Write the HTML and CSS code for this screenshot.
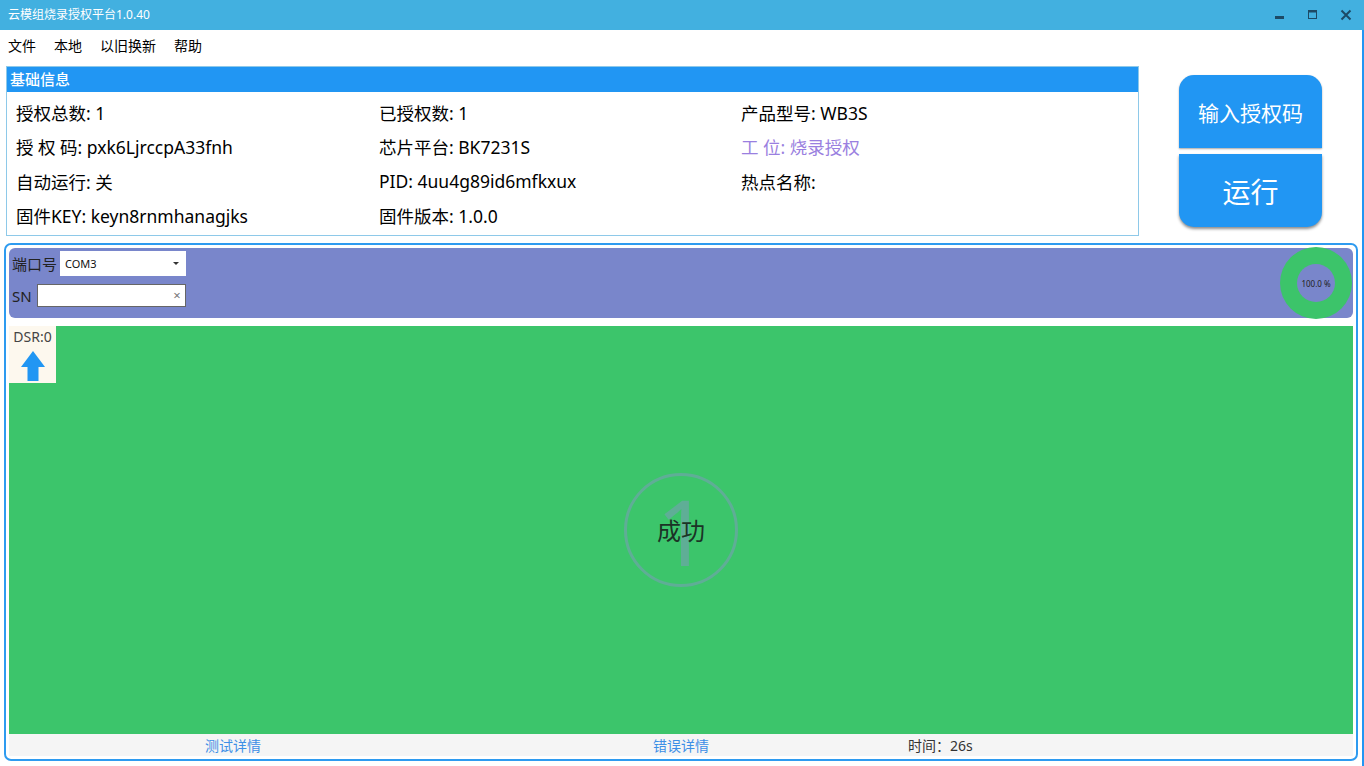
FILE: index.html
```html
<!DOCTYPE html>
<html lang="zh-CN">
<head>
<meta charset="utf-8">
<title>云模组烧录授权平台1.0.40</title>
<link rel="stylesheet" href="styles.css">
</head>
<body>
<div class="titlebar">
  <div class="title">云模组烧录授权平台1.0.40</div>
  <div class="controls">
    <svg class="ctl" width="12" height="12" viewBox="0 0 12 12"><rect x="1" y="7" width="9" height="3" fill="#1d4a66"/></svg>
    <svg class="ctl" width="12" height="12" viewBox="0 0 12 12"><rect x="1.5" y="1.5" width="8" height="8" fill="none" stroke="#1d4a66" stroke-width="1"/><rect x="1" y="1" width="9" height="2.5" fill="#1d4a66"/></svg>
    <svg class="ctl" width="12" height="12" viewBox="0 0 12 12"><path d="M1.5 1.5 L10.5 10.5 M10.5 1.5 L1.5 10.5" stroke="#1d4a66" stroke-width="2"/></svg>
  </div>
</div>
<div class="window">
  <div class="menubar">
    <span class="menu">文件</span>
    <span class="menu">本地</span>
    <span class="menu">以旧换新</span>
    <span class="menu">帮助</span>
  </div>
  <div class="top">
    <div class="group">
      <div class="group-head">基础信息</div>
      <div class="info">
        <div class="cell">授权总数: 1</div>
        <div class="cell">已授权数: 1</div>
        <div class="cell">产品型号: WB3S</div>
        <div class="cell">授 权 码: pxk6LjrccpA33fnh</div>
        <div class="cell">芯片平台: BK7231S</div>
        <div class="cell purple">工 位: 烧录授权</div>
        <div class="cell">自动运行: 关</div>
        <div class="cell">PID: 4uu4g89id6mfkxux</div>
        <div class="cell">热点名称:</div>
        <div class="cell">固件KEY: keyn8rnmhanagjks</div>
        <div class="cell">固件版本: 1.0.0</div>
        <div class="cell"></div>
      </div>
    </div>
    <div class="buttons">
      <div class="btn btn-top">输入授权码</div>
      <div class="btn btn-bottom">运行</div>
    </div>
  </div>
  <div class="panel">
    <div class="ctrlbar">
      <div class="fields">
        <div class="field">
          <span class="lbl">端口号</span>
          <div class="select"><span>COM3</span><svg width="6" height="4" viewBox="0 0 6 4"><path d="M0 0 L6 0 L3 3 Z" fill="#333"/></svg></div>
        </div>
        <div class="field">
          <span class="lbl">SN</span>
          <div class="input"><span class="clear">×</span></div>
        </div>
      </div>
      <div class="donut"><div class="donut-in">100.0 %</div></div>
    </div>
    <div class="stage">
      <div class="dsr">
        <div class="dsr-text">DSR:0</div>
        <svg class="arrow" width="24" height="31" viewBox="0 0 24 31"><path d="M12 0 L24 16 L17.5 16 L17.5 30 L6.5 30 L6.5 16 L0 16 Z" fill="#2196f3"/></svg>
      </div>
      <div class="result">
        <div class="ring"></div>
        <div class="big">1</div>
        <div class="status">成功</div>
      </div>
    </div>
    <div class="footer">
      <div class="fcol"><span class="link">测试详情</span></div>
      <div class="fcol"><span class="link">错误详情</span></div>
      <div class="fcol left"><span class="time">时间：26s</span></div>
    </div>
  </div>
</div>
</body>
</html>
```
FILE: styles.css
```css
* { box-sizing: border-box; }
html, body {
  margin: 0;
  padding: 0;
  width: 1364px;
  height: 766px;
  overflow: hidden;
  background: #ffffff;
  font-family: "Noto Sans", "Noto Sans CJK SC", sans-serif;
  color: #000;
}
.titlebar {
  height: 30px;
  background: #42b0e0;
  display: flex;
  align-items: center;
  justify-content: space-between;
}
.title {
  color: #fff;
  font-size: 12px;
  padding-left: 8px;
  line-height: 30px;
}
.controls {
  display: flex;
  gap: 21px;
  padding-right: 12px;
  align-items: center;
}
.ctl { display: block; }
.window {
  height: 736px;
  border-right: 2px solid #2196f3;
}
.menubar {
  height: 32px;
  display: flex;
  align-items: center;
  padding-left: 8px;
  gap: 18px;
  font-size: 14px;
}
.menu { line-height: 32px; }
.top {
  display: flex;
  padding-left: 6px;
  margin-top: 4px;
}
.group {
  width: 1133px;
  height: 170px;
  border: 1px solid #8ec9e9;
}
.group-head {
  height: 25px;
  background: #2196f3;
  color: #fff;
  font-size: 15px;
  font-weight: 500;
  line-height: 25px;
  padding-left: 3px;
}
.info {
  display: grid;
  grid-template-columns: 363px 362px 1fr;
  grid-auto-rows: 34.5px;
  padding: 3px 0 0 9px;
  font-size: 17.5px;
}
.cell {
  display: flex;
  align-items: center;
  white-space: nowrap;
}
.purple { color: #9a7fe0; }
.buttons {
  margin-left: 40px;
  margin-top: 9px;
  display: flex;
  flex-direction: column;
  gap: 6px;
  width: 143px;
}
.btn {
  height: 73px;
  background: #2196f3;
  color: #fff;
  display: flex;
  align-items: center;
  justify-content: center;
  box-shadow: 0 1px 2px rgba(0,0,0,0.35);
}
.btn-top {
  border-radius: 15px 15px 0 0;
  font-size: 21px;
}
.btn-bottom {
  border-radius: 0 0 15px 15px;
  font-size: 28px;
  box-shadow: 0 2px 3px rgba(0,0,0,0.45);
}
.panel {
  margin: 7px 0 0 4px;
  width: 1354px;
  height: 518px;
  border: 2px solid #2e9bf0;
  border-radius: 7px;
  padding: 3px;
  display: flex;
  flex-direction: column;
}
.ctrlbar {
  height: 70px;
  background: #7986cb;
  border-radius: 6px;
  display: flex;
  justify-content: space-between;
  align-items: center;
  padding: 0 1px 0 3px;
}
.fields {
  align-self: flex-start;
  display: flex;
  flex-direction: column;
  gap: 8px;
  padding-top: 3px;
}
.field {
  display: flex;
  align-items: center;
}
.lbl {
  font-size: 15px;
  color: #222;
  line-height: 20px;
}
.select {
  margin-left: 3px;
  width: 126px;
  height: 25px;
  background: #fff;
  display: flex;
  align-items: center;
  justify-content: space-between;
  padding: 0 7px 0 5px;
  font-size: 11px;
  color: #111;
}
.input {
  margin-left: 5px;
  width: 149px;
  height: 23px;
  background: #fff;
  border: 1px solid #666;
  display: flex;
  align-items: center;
  justify-content: flex-end;
  padding-right: 4px;
}
.clear {
  font-size: 13px;
  color: #777;
  line-height: 1;
}
.donut {
  width: 72px;
  height: 72px;
  border-radius: 50%;
  background: #3cc46a;
  display: flex;
  align-items: center;
  justify-content: center;
}
.donut-in {
  width: 38px;
  height: 38px;
  border-radius: 50%;
  background: #7986cb;
  font-size: 8px;
  color: #222;
  display: flex;
  align-items: center;
  justify-content: center;
  white-space: nowrap;
}
.stage {
  margin-top: 8px;
  height: 408px;
  background: #3cc56b;
  position: relative;
  display: flex;
  align-items: center;
  justify-content: center;
}
.dsr {
  position: absolute;
  left: 0;
  top: 0;
  width: 47px;
  height: 57px;
  background: #fdf8ee;
  display: flex;
  flex-direction: column;
  align-items: center;
}
.dsr-text {
  font-size: 14px;
  color: #444;
  margin-top: 2px;
  line-height: 18px;
}
.arrow { margin-top: 5px; margin-left: 1px; }
.result {
  width: 114px;
  height: 114px;
  position: relative;
  display: flex;
  align-items: center;
  justify-content: center;
  margin-top: -1px;
}
.ring {
  position: absolute;
  inset: 0;
  border-radius: 50%;
  border: 3px solid #5fae96;
}
.big {
  position: absolute;
  inset: 0;
  display: flex;
  align-items: center;
  justify-content: center;
  font-size: 92px;
  line-height: 1;
  color: #5fae96;
  padding-left: 3px;
  padding-top: 2px;
}
.status {
  position: relative;
  font-size: 24px;
  color: #1b3326;
}
.footer {
  height: 22px;
  background: #f5f5f5;
  display: grid;
  grid-template-columns: 1fr 1fr 1fr;
  align-items: center;
  font-size: 14px;
}
.fcol { text-align: center; }
.fcol.left { text-align: left; padding-left: 3px; }
.link { color: #3d8fe6; }
.time { color: #333; }
```
